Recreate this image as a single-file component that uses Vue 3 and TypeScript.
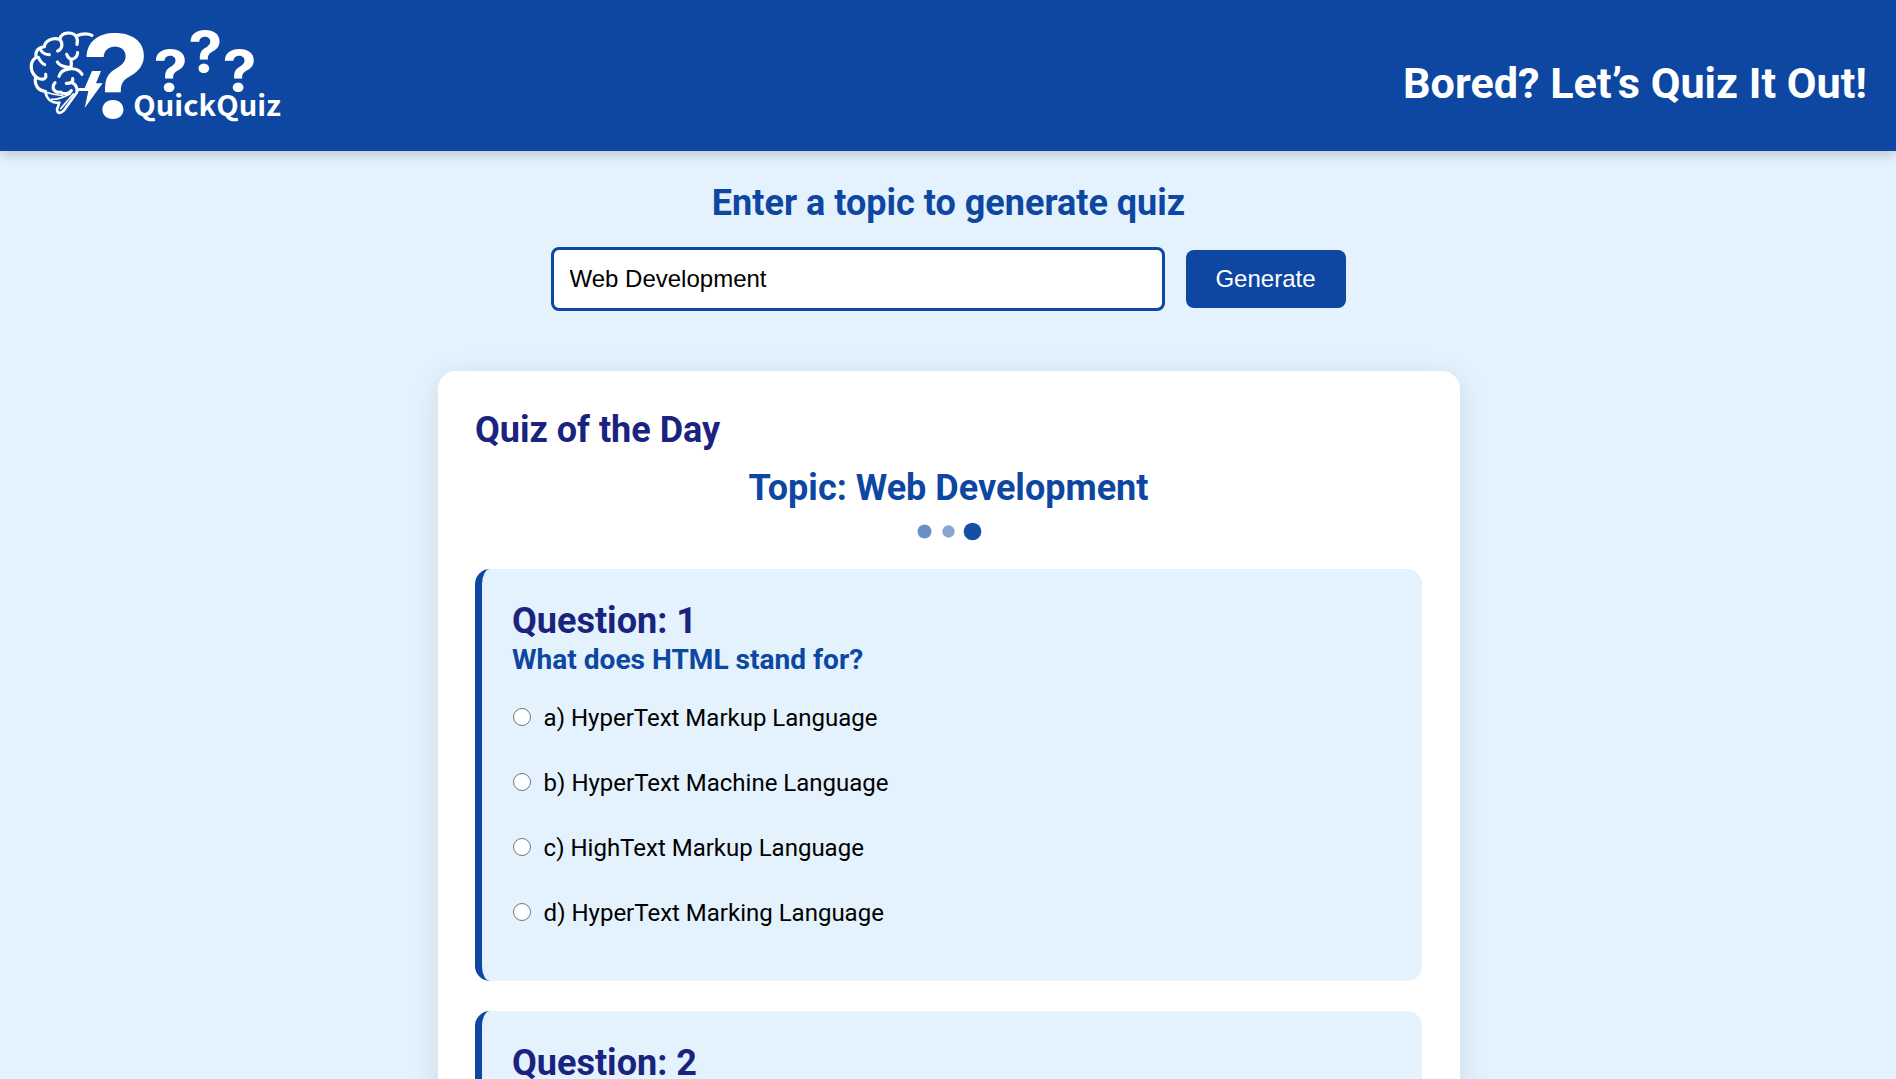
<script setup lang="ts">
import { ref } from 'vue'

interface Question {
  text: string
  options: string[]
}

const topic = ref('Web Development')
const questions: Question[] = [
  {
    text: 'What does HTML stand for?',
    options: [
      'a) HyperText Markup Language',
      'b) HyperText Machine Language',
      'c) HighText Markup Language',
      'd) HyperText Marking Language',
    ],
  },
  {
    text: 'Which language is used to style web pages?',
    options: ['a) HTML', 'b) CSS', 'c) Python', 'd) SQL'],
  },
]
</script>

<template>
  <div class="page">
    <header class="header">
      <svg class="logo" viewBox="90 84 756 288" role="img" aria-label="QuickQuiz">
        <g transform="translate(60 60)" fill="none" stroke="#fff" stroke-width="9.5" stroke-linecap="round" stroke-linejoin="round">
          <path d="M216 46C200 38 182 42 168 48C155 34 124 36 119 58C95 50 75 65 73 80C50 84 45 98 49 112C30 122 28 152 47 170C42 195 55 213 76 214" />
          <path d="M168 48C174 58 173 64 171 73" />
          <path d="M119 58C130 70 127 88 113 93" />
          <path d="M62 90C68 100 78 104 88 104" />
          <path d="M55 112C60 122 66 130 74 134" />
          <path d="M47 170C60 182 82 180 77 163" />
          <path d="M112 126C120 140 138 142 153 143C155 133 154 125 153 118M140 103C143 112 148 117 155 118C166 116 172 107 173 98" />
          <path d="M117 169C124 142 172 138 186 163" />
          <path d="M158 176C160 188 150 190 139 190M156 188C168 194 172 204 171 214" />
          <path d="M105 188C92 204 104 220 122 216C130 224 148 222 154 212" />
          <path d="M76 214C80 240 98 250 118 248L111 268C113 284 124 279 132 271L170 218" stroke-width="8" />
          <path d="M82 218C98 222 110 226 128 226M94 238C112 240 130 232 150 222M122 266L160 222" stroke-width="5" />
        </g>
        <path d="M276 213H303L288 250H308L254 324L265 273H232V264H254Z" fill="#fff" />
        <g class="mark" text-anchor="middle">
          <text transform="translate(347 355) scale(1.05 1)" font-size="345">?</text>
          <text transform="translate(512 272) scale(1.09 1)" font-size="168">?</text>
          <text transform="translate(616 215) scale(1.09 1)" font-size="168">?</text>
          <text transform="translate(719 272) scale(1.09 1)" font-size="168">?</text>
          <text class="name" text-anchor="start" x="400" y="347" font-size="84" textLength="443" lengthAdjust="spacingAndGlyphs">QuickQuiz</text>
        </g>
      </svg>
      <h1 class="tagline">Bored? Let’s Quiz It Out!</h1>
    </header>

    <section class="generator">
      <h2 class="prompt">Enter a topic to generate quiz</h2>
      <div class="controls">
        <input v-model="topic" class="topic-input" type="text" />
        <button class="generate" type="button">Generate</button>
      </div>
    </section>

    <main class="quiz">
      <h2 class="quiz-title">Quiz of the Day</h2>
      <h2 class="quiz-topic">Topic: {{ topic }}</h2>
      <div class="loader">
        <span class="dot dot-mid"></span>
        <span class="dot dot-small"></span>
        <span class="dot dot-large"></span>
      </div>
      <article v-for="(q, i) in questions" :key="i" class="question">
        <h2 class="question-number">Question: {{ i + 1 }}</h2>
        <h3 class="question-text">{{ q.text }}</h3>
        <label v-for="o in q.options" :key="o" class="option">
          <input type="radio" class="radio" :name="`q${i}`" />
          <span>{{ o }}</span>
        </label>
      </article>
    </main>
  </div>
</template>

<style>
body {
  margin: 0;
  background: #e3f2fd;
}
</style>

<style scoped>
.page {
  height: 1079px;
  overflow: hidden;
  background: #e3f2fd;
  font-family: Roboto, sans-serif;
  color: #000;
}
h1,
h2,
h3 {
  margin: 0;
}
.header {
  display: flex;
  justify-content: space-between;
  align-items: center;
  box-sizing: border-box;
  height: 151px;
  padding: 0 29px 0 30px;
  background: #0d47a1;
  box-shadow: 0 3px 12px rgba(0, 0, 0, 0.2);
}
.logo {
  display: block;
  width: 252px;
  height: 96px;
  overflow: visible;
}
.mark {
  fill: #fff;
  font-family: Inter, sans-serif;
  font-weight: 700;
}
.name {
  font-family: 'Noto Sans CJK SC', sans-serif;
}
.tagline {
  padding-top: 16px;
  font-size: 43.2px;
  line-height: 51px;
  color: #fff;
}
.generator {
  padding-top: 31px;
  text-align: center;
}
.prompt {
  font-size: 36px;
  line-height: 42px;
  color: #0d47a1;
  padding-left: 1px;
}
.controls {
  display: flex;
  justify-content: center;
  align-items: center;
  gap: 21px;
  margin-top: 23px;
}
.topic-input {
  box-sizing: border-box;
  width: 614px;
  height: 64px;
  padding: 0 15px 1px 16px;
  border: 3px solid #0d47a1;
  border-radius: 8px;
  outline: none;
  background: #fff;
  color: #000;
  font: 24px 'Liberation Sans', sans-serif;
}
.generate {
  width: 160px;
  height: 58px;
  padding: 0;
  border: 0;
  border-radius: 8px;
  background: #0d47a1;
  color: #fff;
  font: 24px 'Liberation Sans', sans-serif;
}
.quiz {
  box-sizing: border-box;
  width: 1022px;
  margin: 60px 0 0 438px;
  padding: 38px 38px 37px 37px;
  border-radius: 18px;
  background: #fff;
  box-shadow: 0 6px 30px rgba(0, 0, 0, 0.1);
}
.quiz-title,
.question-number {
  font-size: 36px;
  line-height: 42px;
  color: #1a237e;
}
.quiz-topic {
  margin-top: 16px;
  font-size: 36px;
  line-height: 42px;
  color: #0d47a1;
  text-align: center;
}
.loader {
  display: flex;
  justify-content: center;
  align-items: center;
  gap: 9px;
  height: 18px;
  margin: 13px 0 29px;
}
.dot {
  width: 15px;
  height: 15px;
  border-radius: 50%;
  background: #0d47a1;
}
.dot-mid {
  transform: scale(0.93);
  opacity: 0.61;
}
.dot-small {
  transform: scale(0.82);
  opacity: 0.49;
}
.dot-large {
  transform: scale(1.18);
  opacity: 0.96;
}
.question {
  box-sizing: border-box;
  height: 412px;
  margin-bottom: 30px;
  padding: 31px 30px 30px;
  border-left: 7px solid #0d47a1;
  border-radius: 15px;
  background: #e3f2fd;
}
.question-text {
  padding-top: 1px;
  font-size: 28.08px;
  line-height: 33px;
  color: #0d47a1;
}
.option {
  display: flex;
  align-items: center;
  height: 28px;
  margin: 37px 0 0 0.6px;
  font-size: 24px;
  line-height: 28px;
}
.question-text + .option {
  margin-top: 27.5px;
}
.radio {
  flex: none;
  box-sizing: border-box;
  appearance: none;
  width: 18px;
  height: 18px;
  margin: 0 13px 2px 0;
  border: 1.5px solid #767676;
  border-radius: 50%;
  background: #fff;
}
</style>
